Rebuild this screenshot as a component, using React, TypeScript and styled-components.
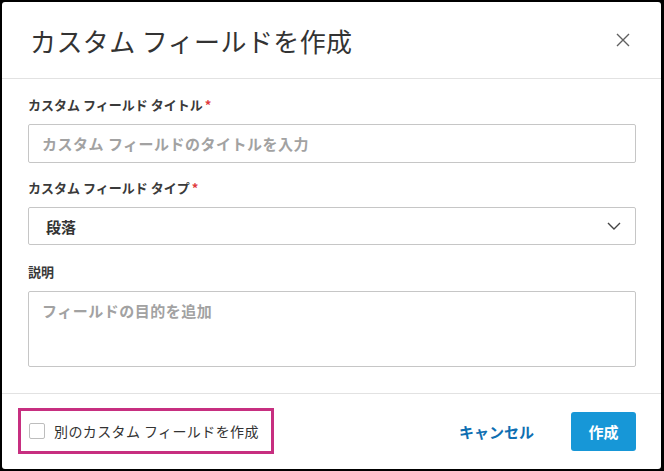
import React, { useState } from "react";
import styled, { createGlobalStyle } from "styled-components";

const GlobalStyle = createGlobalStyle`
  html, body {
    margin: 0;
    padding: 0;
    background: #000;
  }
  body {
    font-family: "Noto Sans CJK JP", "Liberation Sans", sans-serif;
    padding: 2px 3px 2px 2px;
  }
`;

const Modal = styled("div")`
  width: 659px;
  height: 467px;
  background: #fff;
  border-radius: 3px;
  display: flex;
  flex-direction: column;
  overflow: hidden;
`;

const Header = styled("div")`
  height: 77px;
  display: flex;
  align-items: center;
  justify-content: space-between;
  padding: 0 30px 0 28px;
  border-bottom: 1px solid #e2e2e2;
  box-sizing: border-box;
  flex: none;
`;

const Title = styled("h2")`
  margin: 0;
  font-size: 26px;
  font-weight: 400;
  color: #333;
  letter-spacing: 0.4px;
`;

const CloseButton = styled("button")`
  border: 0;
  background: none;
  padding: 0;
  width: 16px;
  height: 16px;
  display: flex;
  cursor: pointer;
`;

const Body = styled("div")`
  flex: 1;
  padding: 17px 25px 0 26px;
  display: flex;
  flex-direction: column;
  border-bottom: 1px solid #e2e2e2;
`;

const Label = styled("label")`
  font-size: 13px;
  line-height: 18px;
  font-weight: 700;
  color: #3a3a3a;
  margin-bottom: 10px;
`;

const Required = styled("span")`
  color: #e0393e;
  margin-left: 2px;
`;

const Field = styled("div")<{ $gap?: number }>`
  display: flex;
  flex-direction: column;
  margin-bottom: ${(p) => p.$gap ?? 16}px;
`;

const TextInput = styled("input")`
  height: 39px;
  box-sizing: border-box;
  border: 1px solid #c6c6c6;
  border-radius: 2px;
  padding: 0 13px;
  font-family: inherit;
  font-size: 15px;
  font-weight: 700;
  letter-spacing: 0.5px;
  color: #333;
  outline: none;
  &::placeholder {
    color: #a2a2a2;
  }
`;

const SelectBox = styled("div")`
  height: 38px;
  box-sizing: border-box;
  border: 1px solid #c6c6c6;
  border-radius: 2px;
  padding: 0 14px 0 17px;
  display: flex;
  align-items: center;
  justify-content: space-between;
  font-size: 15px;
  font-weight: 700;
  color: #333;
`;

const TextArea = styled("textarea")`
  height: 76px;
  box-sizing: border-box;
  border: 1px solid #c6c6c6;
  border-radius: 2px;
  padding: 8px 13px;
  font-family: inherit;
  font-size: 15px;
  font-weight: 700;
  letter-spacing: 0.5px;
  resize: none;
  outline: none;
  &::placeholder {
    color: #a2a2a2;
  }
`;

const Footer = styled("div")`
  height: 75px;
  flex: none;
  display: flex;
  align-items: center;
  padding: 0 25px 0 16px;
  box-sizing: border-box;
`;

const CheckRow = styled("label")`
  display: flex;
  align-items: center;
  gap: 9px;
  height: 46px;
  box-sizing: border-box;
  padding: 0 12px 0 8px;
  border: 3px solid #c72f80;
  margin-top: -2px;
  font-size: 14px;
  letter-spacing: 0.4px;
  color: #333;
  cursor: pointer;
`;

const CheckBox = styled("span")<{ $checked: boolean }>`
  width: 16px;
  height: 16px;
  box-sizing: border-box;
  border: 1px solid #bdbdbd;
  border-radius: 2px;
  background: ${(p) => (p.$checked ? "#1797d7" : "#fff")};
`;

const Spacer = styled("div")`
  flex: 1;
`;

const CancelButton = styled("button")`
  border: 0;
  background: none;
  font-family: inherit;
  font-size: 15px;
  font-weight: 700;
  color: #0f6fb2;
  padding: 0 16px;
  margin-right: 21px;
  cursor: pointer;
`;

const PrimaryButton = styled("button")`
  width: 65px;
  height: 39px;
  border: 0;
  border-radius: 3px;
  background: #1797d7;
  color: #fff;
  font-family: inherit;
  font-size: 15px;
  font-weight: 700;
  cursor: pointer;
`;

const App = () => {
  const [another, setAnother] = useState<boolean>(false);

  return (
    <>
      <GlobalStyle />
      <Modal>
        <Header>
          <Title>カスタム フィールドを作成</Title>
          <CloseButton aria-label="閉じる">
            <svg width="16" height="16" viewBox="0 0 16 16">
              <path
                d="M2 2 L14 14 M14 2 L2 14"
                stroke="#606060"
                strokeWidth="1.4"
                fill="none"
              />
            </svg>
          </CloseButton>
        </Header>
        <Body>
          <Field>
            <Label>
              カスタム フィールド タイトル<Required>*</Required>
            </Label>
            <TextInput placeholder="カスタム フィールドのタイトルを入力" />
          </Field>
          <Field $gap={18}>
            <Label>
              カスタム フィールド タイプ<Required>*</Required>
            </Label>
            <SelectBox>
              <span>段落</span>
              <svg width="14" height="8" viewBox="0 0 14 8">
                <path
                  d="M1 1 L7 7 L13 1"
                  stroke="#444"
                  strokeWidth="1.4"
                  fill="none"
                />
              </svg>
            </SelectBox>
          </Field>
          <Field>
            <Label>説明</Label>
            <TextArea placeholder="フィールドの目的を追加" />
          </Field>
        </Body>
        <Footer>
          <CheckRow onClick={() => setAnother(!another)}>
            <CheckBox $checked={another} />
            別のカスタム フィールドを作成
          </CheckRow>
          <Spacer />
          <CancelButton>キャンセル</CancelButton>
          <PrimaryButton>作成</PrimaryButton>
        </Footer>
      </Modal>
    </>
  );
};

export default App;
